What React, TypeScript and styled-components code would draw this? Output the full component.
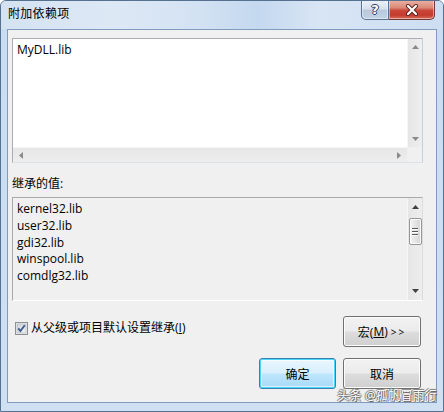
import React from 'react';
import styled, { createGlobalStyle } from 'styled-components';

const FONT = `"Open Sans", "Noto Sans CJK SC", sans-serif`;

const Global = createGlobalStyle`
  html, body { margin: 0; padding: 0; background: #ffffff; }
  body { width: 444px; height: 412px; overflow: hidden; }
`;

const Window = styled.div`
  position: relative;
  box-sizing: border-box;
  width: 444px;
  height: 412px;
  border: 1px solid #56708f;
  border-radius: 6px 6px 0 0;
  background: linear-gradient(to bottom, #c9dcf1, #cfe0f3);
  padding: 0 6px 8px 6px;
  display: flex;
  flex-direction: column;
  font-family: ${FONT};
  color: #000;
  overflow: hidden;
`;

const TitleBar = styled.div`
  height: 28px;
  margin: 0 -6px;
  padding-left: 7px;
  display: flex;
  align-items: flex-start;
  justify-content: space-between;
  background: linear-gradient(
    to right,
    #d4e2f2 0%,
    #dde8f5 25%,
    #d3e2f3 45%,
    #c4d8ef 58%,
    #d8e5f4 72%,
    #cddef2 100%
  );
`;

const Title = styled.div`
  font-size: 12px;
  line-height: 26px;
  color: #000;
  letter-spacing: 0.3px;
`;

const Caption = styled.div`
  display: flex;
  margin-top: -1px;
  margin-right: 8px;
`;

const CapBtn = styled.div<{ $close?: boolean }>`
  box-sizing: border-box;
  width: ${(p) => (p.$close ? 46 : 28)}px;
  height: 20px;
  border: 1px solid ${(p) => (p.$close ? '#6e3a35' : '#5d7190')};
  border-top: none;
  border-left: ${(p) => (p.$close ? 'none' : undefined)};
  border-radius: ${(p) => (p.$close ? '0 0 5px 0' : '0 0 0 5px')};
  display: flex;
  align-items: center;
  justify-content: center;
  background: ${(p) =>
    p.$close
      ? 'linear-gradient(to bottom, #eab3a6 0%, #dc8a78 40%, #c9473a 55%, #c43b2d 80%, #d9705d 100%)'
      : 'linear-gradient(to bottom, #edf2f9 0%, #d6e1ee 45%, #b9c9dc 55%, #c3d3e6 100%)'};
  box-shadow: inset 0 0 0 1px rgba(255, 255, 255, 0.45);
`;

const HelpGlyph = styled.span`
  font-family: "DejaVu Sans", sans-serif;
  font-weight: bold;
  font-size: 13px;
  line-height: 13px;
  color: #ffffff;
  text-shadow: 1px 0 0 #2f4058, -1px 0 0 #2f4058, 0 1px 0 #2f4058, 0 -1px 0 #2f4058;
`;

const Client = styled.div`
  flex: 1;
  border: 1px solid #7f9bbd;
  background: #f0f0f0;
  padding: 8px 13px 0 4px;
  display: flex;
  flex-direction: column;
`;

const EditBox = styled.div`
  box-sizing: border-box;
  height: 125px;
  border: 1px solid #abadb3;
  border-right-color: #c9ced6;
  border-bottom-color: #dde2e8;
  background: #ffffff;
  display: grid;
  grid-template-columns: 1fr 15px;
  grid-template-rows: 1fr 15px;
`;

const TextArea = styled.div`
  padding: 2px 4px;
  font-size: 12px;
  line-height: 17px;
`;

const VScroll = styled.div`
  display: flex;
  flex-direction: column;
  align-items: center;
  background: linear-gradient(to right, #e6e6e6, #eeeeee);
  border-left: 1px solid #f5f5f5;
`;

const HScroll = styled.div`
  display: flex;
  align-items: center;
  justify-content: space-between;
  padding: 0 6px 0 6px;
  background: linear-gradient(to bottom, #e6e6e6, #eeeeee);
  border-top: 1px solid #f5f5f5;
`;

const Corner = styled.div`
  background: #f0f0f0;
`;

const ArrowBtn = styled.div<{ $h: number }>`
  height: ${(p) => p.$h}px;
  width: 100%;
  display: flex;
  align-items: center;
  justify-content: center;
`;

const Spacer = styled.div`
  flex: 1;
`;

const Label = styled.div`
  margin-top: 12px;
  font-size: 12px;
  line-height: 17px;
`;

const ListBox = styled.div`
  box-sizing: border-box;
  margin-top: 5px;
  height: 104px;
  border: 1px solid #a9a9a9;
  border-right-color: #dcdcdc;
  border-bottom-color: #ffffff;
  background: #f0f0f0;
  display: grid;
  grid-template-columns: 1fr 15px;
`;

const List = styled.div`
  padding: 3px 4px 0 4px;
  font-size: 12px;
  line-height: 16.75px;
`;

const Thumb = styled.div`
  box-sizing: border-box;
  margin-top: 2px;
  width: 13px;
  height: 27px;
  border: 1px solid #979797;
  border-radius: 2px;
  background: linear-gradient(to right, #f4f4f4, #e4e4e4 50%, #d4d4d4);
  box-shadow: inset 0 0 0 1px #fbfbfb;
  display: flex;
  flex-direction: column;
  align-items: center;
  justify-content: center;
  gap: 1px;
`;

const Grip = styled.div`
  width: 6px;
  height: 1px;
  background: #5a5a5a;
  border-bottom: 1px solid #ffffff;
`;

const CheckRow = styled.div`
  margin-top: 15px;
  margin-right: 2px;
  display: flex;
  justify-content: space-between;
  align-items: flex-start;
`;

const CheckLabel = styled.label`
  display: flex;
  align-items: center;
  gap: 3px;
  padding-left: 3px;
  padding-top: 5px;
  font-size: 12px;
  line-height: 14px;
`;

const Under = styled.span`
  text-decoration: underline;
  text-underline-offset: 1px;
`;

const BtnRow = styled.div`
  margin-top: 11px;
  margin-right: 2px;
  display: flex;
  justify-content: flex-end;
  gap: 7px;
`;

const Button = styled.div<{ $w: number; $default?: boolean }>`
  box-sizing: border-box;
  width: ${(p) => p.$w}px;
  height: 31px;
  border: 1px solid ${(p) => (p.$default ? '#3c7fb1' : '#707070')};
  border-radius: 3px;
  display: flex;
  align-items: center;
  justify-content: center;
  font-size: 12px;
  background: ${(p) =>
    p.$default
      ? 'linear-gradient(to bottom, #eaf6fd 0%, #d9f0fc 48%, #bee6fd 52%, #a7d9f5 100%)'
      : 'linear-gradient(to bottom, #f2f2f2 0%, #ebebeb 48%, #dddddd 52%, #cfcfcf 100%)'};
  box-shadow: ${(p) =>
    p.$default
      ? 'inset 0 0 0 1px #48d7fb, inset 0 0 0 2px rgba(255,255,255,0.6)'
      : 'inset 0 0 0 1px #fcfcfc'};
`;

const Arrows = styled.span`
  font-size: 10px;
  letter-spacing: 2px;
  margin-left: 3px;
`;

const Watermark = styled.div`
  position: absolute;
  right: 6px;
  bottom: 8px;
  font-size: 12px;
  line-height: 15px;
  color: #ffffff;
  text-shadow: 1px 1px 0 #6a6a6a, -1px 0 0 #8a8a8a, 0 -1px 0 #8a8a8a, 0 0 2px #444444;
  letter-spacing: 0.2px;
`;

type Dir = 'up' | 'down' | 'left' | 'right';

const Tri: React.FC<{ dir: Dir; color: string }> = ({ dir, color }) => {
  const pts: Record<Dir, string> = {
    up: '0,4 7,4 3.5,0',
    down: '0,0 7,0 3.5,4',
    left: '4,0 4,7 0,3.5',
    right: '0,0 0,7 4,3.5',
  };
  const horiz = dir === 'left' || dir === 'right';
  return (
    <svg width={horiz ? 4 : 7} height={horiz ? 7 : 4} viewBox={horiz ? '0 0 4 7' : '0 0 7 4'}>
      <polygon points={pts[dir]} fill={color} />
    </svg>
  );
};

const CloseIcon = () => (
  <svg width="14" height="12" viewBox="0 0 14 12">
    <path d="M3 2 L11 10 M11 2 L3 10" stroke="#5a2320" strokeWidth="4" strokeLinecap="round" />
    <path d="M3 2 L11 10 M11 2 L3 10" stroke="#ffffff" strokeWidth="2.2" strokeLinecap="round" />
  </svg>
);

const CheckBoxIcon = () => (
  <svg width="13" height="13" viewBox="0 0 13 13">
    <defs>
      <linearGradient id="cbg" x1="0" y1="0" x2="1" y2="1">
        <stop offset="0" stopColor="#cbcfd5" />
        <stop offset="1" stopColor="#f7f7f7" />
      </linearGradient>
    </defs>
    <rect x="0.5" y="0.5" width="12" height="12" fill="#f4f4f4" stroke="#8e8f8f" />
    <rect x="2" y="2" width="9" height="9" fill="url(#cbg)" stroke="#b5bcc6" strokeWidth="0.8" />
    <path d="M3.3 6.4 L5.4 9 L9.8 3.2" fill="none" stroke="#3c5a91" strokeWidth="1.8" />
  </svg>
);

const libs = ['kernel32.lib', 'user32.lib', 'gdi32.lib', 'winspool.lib', 'comdlg32.lib'];

export default function App() {
  return (
    <>
      <Global />
      <Window>
        <TitleBar>
          <Title>附加依赖项</Title>
          <Caption>
            <CapBtn>
              <HelpGlyph>?</HelpGlyph>
            </CapBtn>
            <CapBtn $close>
              <CloseIcon />
            </CapBtn>
          </Caption>
        </TitleBar>
        <Client>
          <EditBox>
            <TextArea>MyDLL.lib</TextArea>
            <VScroll>
              <ArrowBtn $h={16}>
                <Tri dir="up" color="#8a8a8a" />
              </ArrowBtn>
              <Spacer />
              <ArrowBtn $h={16}>
                <Tri dir="down" color="#8a8a8a" />
              </ArrowBtn>
            </VScroll>
            <HScroll>
              <Tri dir="left" color="#8a8a8a" />
              <Tri dir="right" color="#8a8a8a" />
            </HScroll>
            <Corner />
          </EditBox>
          <Label>继承的值:</Label>
          <ListBox>
            <List>
              {libs.map((l) => (
                <div key={l}>{l}</div>
              ))}
            </List>
            <VScroll>
              <ArrowBtn $h={18}>
                <Tri dir="up" color="#404040" />
              </ArrowBtn>
              <Thumb>
                <Grip />
                <Grip />
                <Grip />
              </Thumb>
              <Spacer />
              <ArrowBtn $h={18}>
                <Tri dir="down" color="#404040" />
              </ArrowBtn>
            </VScroll>
          </ListBox>
          <CheckRow>
            <CheckLabel>
              <CheckBoxIcon />
              <span>
                从父级或项目默认设置继承(<Under>I</Under>)
              </span>
            </CheckLabel>
            <Button $w={78}>
              宏(<Under>M</Under>)<Arrows>&gt;&gt;</Arrows>
            </Button>
          </CheckRow>
          <BtnRow>
            <Button $w={77} $default>
              确定
            </Button>
            <Button $w={78}>取消</Button>
          </BtnRow>
        </Client>
        <Watermark>头条 @孤帆冒雨行</Watermark>
      </Window>
    </>
  );
}
